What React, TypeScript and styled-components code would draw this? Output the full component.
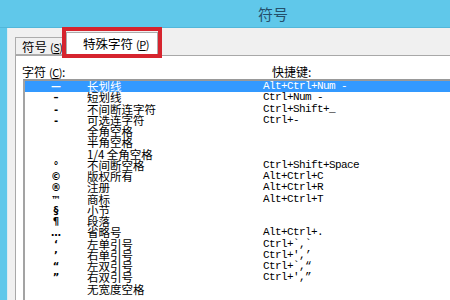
import React from "react";
import styled, { createGlobalStyle } from "styled-components";

const Global = createGlobalStyle`
  html, body { margin: 0; padding: 0; width: 450px; height: 300px; overflow: hidden; background: #f0f0f0; }
  #root { width: 450px; height: 300px; overflow: hidden; }
`;

const CJK = `"Noto Sans CJK SC", "Noto Sans", sans-serif`;

const Window = styled.div`
  position: relative;
  width: 450px;
  height: 300px;
  display: flex;
  flex-direction: column;
  overflow: hidden;
  font-family: ${CJK};
`;

const TitleBar = styled.div`
  height: 27px;
  flex: none;
  background: #60c8ea;
  border-bottom: 1px solid #52b7da;
  display: flex;
  align-items: center;
  padding-left: 258px;
  font-size: 15px;
  color: #25506b;
`;

const Body = styled.div`
  flex: 1;
  display: flex;
  min-height: 0;
`;

const FrameEdge = styled.div`
  width: 7px;
  flex: none;
  background: #60c8ea;
`;

const DialogArea = styled.div`
  flex: 1;
  display: flex;
  flex-direction: column;
  background: #f0f0f0;
  border-left: 1px solid #dcecf2;
  padding-left: 7px;
  min-width: 0;
`;

const TabStrip = styled.div`
  display: flex;
  align-items: flex-end;
  height: 27px;
  flex: none;
`;

const Tab = styled.div<{ $active?: boolean }>`
  position: relative;
  z-index: ${(p) => (p.$active ? 2 : 1)};
  box-sizing: border-box;
  height: ${(p) => (p.$active ? 24 : 18)}px;
  width: ${(p) => (p.$active ? 92 : 51)}px;
  margin-bottom: ${(p) => (p.$active ? -1 : 0)}px;
  background: ${(p) => (p.$active ? "#ffffff" : "#f0f0f0")};
  border: 1px solid #acacac;
  border-bottom: ${(p) => (p.$active ? "none" : "1px solid #acacac")};
  padding-left: ${(p) => (p.$active ? 16 : 6)}px;
  padding-top: ${(p) => (p.$active ? 3 : 1)}px;
  font-size: 12.5px;
  line-height: 15px;
  color: #000;
  white-space: nowrap;
  overflow: hidden;
`;

const Mnemonic = styled.span`
  font-size: 11px;
  letter-spacing: -0.5px;
  margin-left: 3px;
`;

const Panel = styled.div`
  flex: 1;
  background: #ffffff;
  border-top: 1px solid #a8a8a8;
  border-left: 1px solid #a8a8a8;
  display: flex;
  flex-direction: column;
  min-height: 0;
`;

const LabelRow = styled.div`
  display: grid;
  grid-template-columns: 250px 1fr;
  padding: 9px 0 0 6px;
  height: 14px;
  flex: none;
  font-size: 12px;
  line-height: 14px;
  color: #000;
  white-space: nowrap;
`;

const ListBox = styled.div`
  flex: 1;
  margin-left: 7px;
  border-top: 2px solid #999999;
  border-left: 2px solid #a3a3a3;
  background: #fff;
  overflow: hidden;
`;

const Row = styled.div<{ $selected?: boolean }>`
  display: grid;
  grid-template-columns: 62px 176px 1fr;
  height: 11.25px;
  line-height: 11.25px;
  background: ${(p) => (p.$selected ? "#3399ff" : "transparent")};
  color: ${(p) => (p.$selected ? "#ffffff" : "#000000")};
  white-space: nowrap;
`;

const Sym = styled.span`
  text-align: center;
  font-family: "DejaVu Sans", sans-serif;
  font-size: 10px;
  font-weight: bold;
`;

const Name = styled.span`
  font-family: ${CJK};
  font-size: 11.5px;
`;

const Keys = styled.span`
  font-family: "Liberation Mono", monospace;
  font-size: 11px;
  letter-spacing: -0.6px;
`;

const Highlight = styled.div`
  position: absolute;
  left: 62px;
  top: 27px;
  width: 100px;
  height: 31px;
  box-sizing: border-box;
  border: 4.5px solid #d6242e;
  z-index: 5;
  pointer-events: none;
`;

const rows: [string, string, string][] = [
  ["—", "长划线", "Alt+Ctrl+Num -"],
  ["–", "短划线", "Ctrl+Num -"],
  ["‑", "不间断连字符", "Ctrl+Shift+_"],
  ["-", "可选连字符", "Ctrl+-"],
  ["", "全角空格", ""],
  ["", "半角空格", ""],
  ["", "1/4 全角空格", ""],
  ["°", "不间断空格", "Ctrl+Shift+Space"],
  ["©", "版权所有", "Alt+Ctrl+C"],
  ["®", "注册", "Alt+Ctrl+R"],
  ["™", "商标", "Alt+Ctrl+T"],
  ["§", "小节", ""],
  ["¶", "段落", ""],
  ["…", "省略号", "Alt+Ctrl+."],
  ["‘", "左单引号", "Ctrl+`,`"],
  ["’", "右单引号", "Ctrl+',’"],
  ["“", "左双引号", "Ctrl+`,“"],
  ["”", "右双引号", "Ctrl+',”"],
  ["", "无宽度空格", ""],
];

export default function App() {
  return (
    <>
      <Global />
      <Window>
        <TitleBar>符号</TitleBar>
        <Body>
          <FrameEdge />
          <DialogArea>
            <TabStrip>
              <Tab>
                符号<Mnemonic>(<u>S</u>)</Mnemonic>
              </Tab>
              <Tab $active>
                特殊字符<Mnemonic>(<u>P</u>)</Mnemonic>
              </Tab>
            </TabStrip>
            <Panel>
              <LabelRow>
                <span>
                  字符<Mnemonic>(<u>C</u>)</Mnemonic>:
                </span>
                <span>快捷键:</span>
              </LabelRow>
              <ListBox>
                {rows.map(([s, n, k], i) => (
                  <Row key={i} $selected={i === 0}>
                    <Sym>{s}</Sym>
                    <Name>{n}</Name>
                    <Keys>{k}</Keys>
                  </Row>
                ))}
              </ListBox>
            </Panel>
          </DialogArea>
        </Body>
        <Highlight />
      </Window>
    </>
  );
}
